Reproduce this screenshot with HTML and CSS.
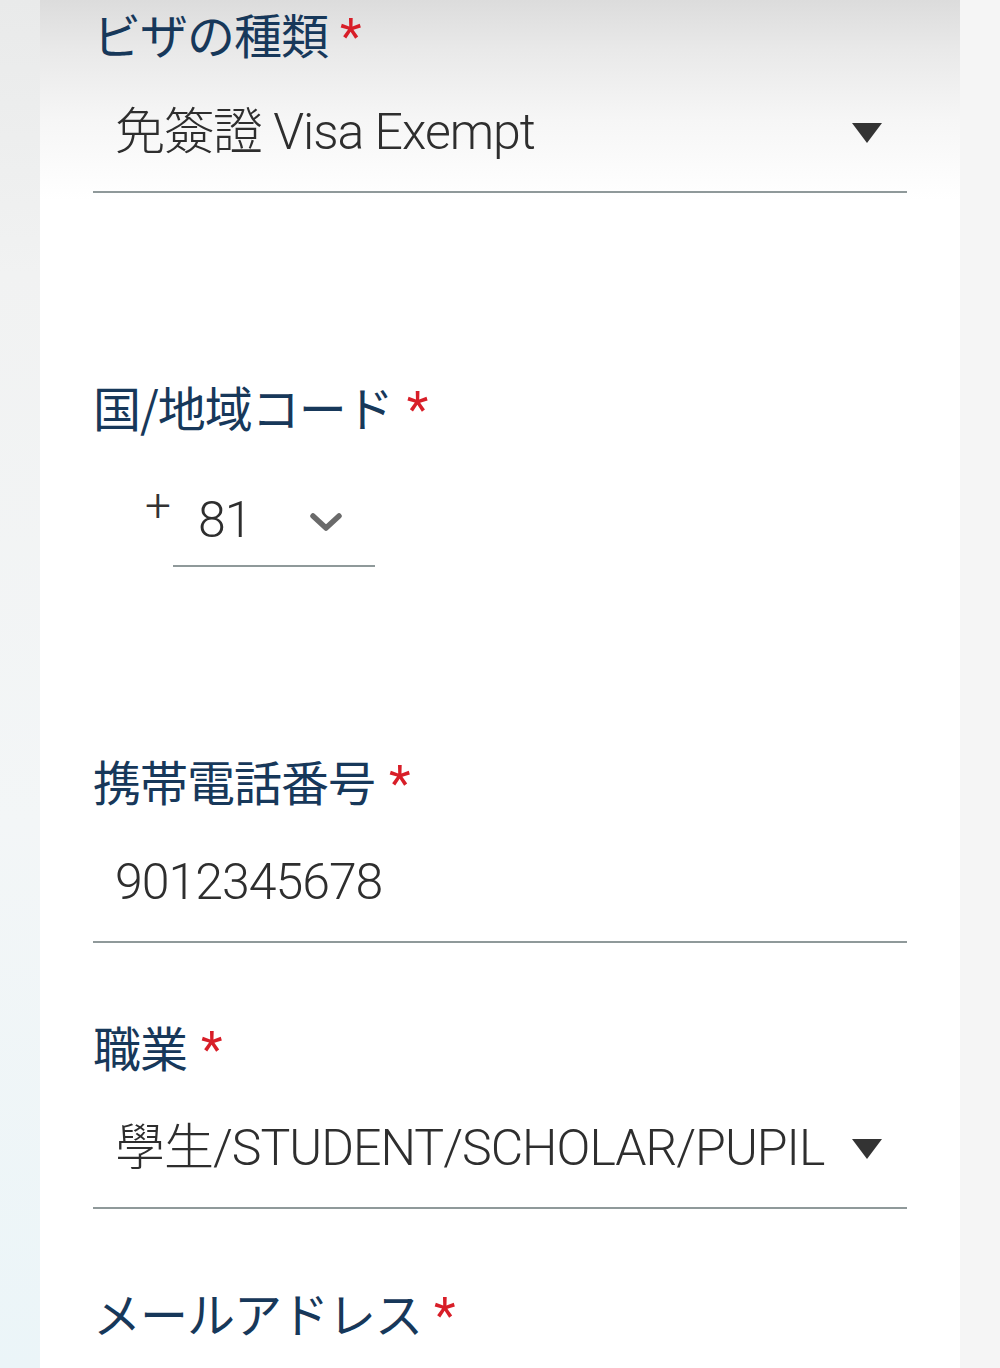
FILE: index.html
```html
<!DOCTYPE html>
<html lang="ja">
<head>
<meta charset="utf-8">
<title>Form</title>
<link rel="stylesheet" href="styles.css">
</head>
<body>
<div class="page">
  <main class="card">
    <div class="field field--spaced field--first">
      <div class="label">ビザの種類<span class="req">*</span></div>
      <div class="control select">
        <span class="value">免簽證 Visa Exempt</span>
        <span class="tri"></span>
      </div>
    </div>

    <div class="field field--spaced">
      <div class="label">国/地域コード<span class="req req--gap">*</span></div>
      <div class="code-row">
        <span class="plus">+</span>
        <div class="control code-select">
          <span class="value">81</span>
          <svg class="chev" width="32" height="20" viewBox="0 0 32 20"><path d="M3 4 L16 16 L29 4" fill="none" stroke="#6a6a6a" stroke-width="5.5" stroke-linecap="round" stroke-linejoin="round"/></svg>
        </div>
      </div>
    </div>

    <div class="field">
      <div class="label">携帯電話番号<span class="req req--gap">*</span></div>
      <div class="control">
        <span class="value">9012345678</span>
      </div>
    </div>

    <div class="field">
      <div class="label">職業<span class="req req--gap">*</span></div>
      <div class="control select">
        <span class="value">學生/STUDENT/SCHOLAR/PUPIL</span>
        <span class="tri"></span>
      </div>
    </div>

    <div class="field">
      <div class="label">メールアドレス<span class="req">*</span></div>
    </div>
  </main>
</div>
</body>
</html>
```

FILE: styles.css
```css
html, body {
  margin: 0;
  padding: 0;
}

body {
  background: #f4f5f5;
  font-family: Roboto, "Noto Sans CJK TC", sans-serif;
}

.page {
  min-height: 1368px;
  padding: 0 40px 0 40px;
  background: linear-gradient(180deg, #e9eaea 0%, #f1f2f2 20%, #f3f6f7 60%, #ebf5f8 100%);
  background-repeat: no-repeat;
  background-size: 40px 100%;
  background-color: #f5f5f5;
}

.card {
  width: 920px;
  min-height: 1368px;
  box-sizing: border-box;
  padding: 3px 53px 0 53px;
  background: linear-gradient(180deg, #dcdcdc 0px, #e9e9e9 50px, #f6f6f6 120px, #ffffff 200px, #ffffff 100%);
}

.field {
  display: flex;
  flex-direction: column;
  margin-bottom: 73px;
}

.field--spaced {
  margin-bottom: 183px;
}

.label {
  font-family: "Noto Sans CJK JP", sans-serif;
  font-size: 48px;
  line-height: 60px;
  height: 60px;
  letter-spacing: -1px;
  color: #17385a;
  white-space: nowrap;
}

.req {
  font-family: Roboto, sans-serif;
  color: #d81e28;
  font-size: 50px;
  margin-left: 12px;
  letter-spacing: 0;
}

.req--gap {
  margin-left: 14px;
}

.control {
  display: flex;
  align-items: center;
  margin-top: 42px;
  height: 60px;
  padding: 0 25px 29px 22px;
  border-bottom: 2px solid #8f999a;
}

.field--first .control {
  margin-top: 39px;
}

.value {
  font-size: 50px;
  font-weight: 300;
  line-height: 60px;
  letter-spacing: -1px;
  color: #2e2e2e;
  white-space: nowrap;
  flex: 1;
}

.tri {
  width: 0;
  height: 0;
  border-left: 15px solid transparent;
  border-right: 15px solid transparent;
  border-top: 20px solid #333333;
  margin-top: 2px;
}

.code-row {
  display: flex;
  align-items: flex-start;
  margin-top: 54px;
  padding-left: 52px;
}

.plus {
  font-size: 46px;
  font-weight: 300;
  line-height: 46px;
  color: #333333;
  width: 28px;
  margin-top: -8px;
}

.code-select {
  margin-top: 0;
  width: 202px;
  box-sizing: border-box;
  height: auto;
  padding: 0 0 15px 25px;
}

.code-select .value {
  flex: 0 0 auto;
  width: 112px;
}

.chev {
  display: block;
  margin-top: 4px;
}
```
